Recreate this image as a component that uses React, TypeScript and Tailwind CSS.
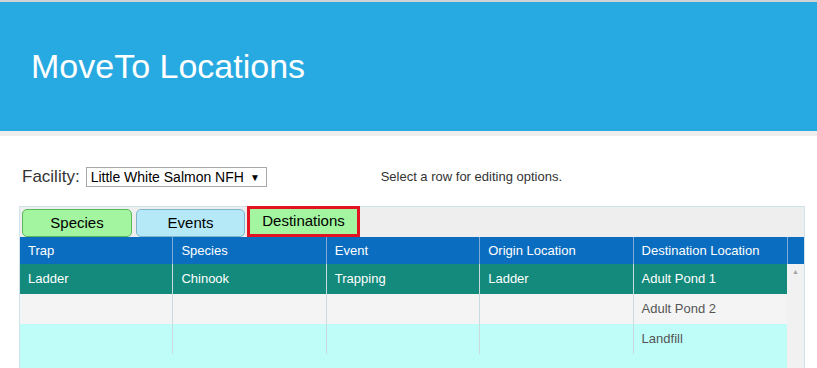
import React from 'react';

const columns = ['Trap', 'Species', 'Event', 'Origin Location', 'Destination Location'];

const rows = [
  { cells: ['Ladder', 'Chinook', 'Trapping', 'Ladder', 'Adult Pond 1'], selected: true },
  { cells: ['', '', '', '', 'Adult Pond 2'], selected: false },
  { cells: ['', '', '', '', 'Landfill'], selected: false },
];

export default function App() {
  return (
    <div className="w-[817px] h-[368px] overflow-hidden bg-white font-['Liberation_Sans',Arial,sans-serif]">
      {/* header */}
      <div className="border-t-2 border-[#cfd3d6] bg-[#27aae1] h-[131px] flex items-center pl-[31px]">
        <h1 className="text-white text-[34px] leading-none mt-[-2px]">MoveTo Locations</h1>
      </div>
      <div className="h-[5px] bg-[#eeeeee]" />

      {/* facility row */}
      <div className="flex items-center pl-[22px] pt-[24px] h-[60px] pb-[2px]">
        <span className="text-[17px] text-[#333] mr-[6px]">Facility:</span>
        <div className="flex items-center h-[20px] w-[181px] border border-[#a9a9a9] px-[4px] text-[14px] text-black">
          Little White Salmon NFH <span className="ml-[6px] text-[10px]">▼</span>
        </div>
        <span className="ml-[114px] text-[13px] text-[#333]">Select a row for editing options.</span>
      </div>

      {/* tab panel */}
      <div className="ml-[19px] mt-[10px] w-[786px] border border-[#cde4ea] bg-[#eeeeee]">
        <div className="flex items-end h-[30px] pl-[2px] gap-[4px]">
          <button className="w-[110px] h-[28px] rounded-[5px] border border-[#5cb85c] bg-[#a3f59f] text-[15px] text-black">
            Species
          </button>
          <button className="w-[109px] h-[28px] rounded-[5px] border border-[#7fb6cc] bg-[#b5e9f7] text-[15px] text-black">
            Events
          </button>
          <button className="w-[113px] h-[31px] border-[3px] border-[#e2141f] bg-[#a3f59f] text-[15px] text-black ml-[-2px]">
            Destinations
          </button>
        </div>
        <div className="flex">
          <div className="w-[767px]">
            <div className="grid grid-cols-5 h-[27px] bg-[#0b6dbf] text-white text-[13px]">
              {columns.map((c, i) => (
                <div key={c} className={`flex items-center pl-[8px] ${i < 4 ? 'border-r border-[#7fa9d8]' : ''}`}>
                  {c}
                </div>
              ))}
            </div>
            <div className="bg-[#bffdf9] h-[110px]">
              {rows.map((r, ri) => (
                <div
                  key={ri}
                  className={`grid grid-cols-5 h-[30px] text-[13px] ${
                    r.selected ? 'bg-[#138a7b] text-white' : ri === 1 ? 'bg-[#f4f4f4] text-[#555]' : 'bg-[#bffdf9] text-[#555]'
                  }`}
                >
                  {r.cells.map((cell, ci) => (
                    <div key={ci} className={`flex items-center pl-[8px] ${ci < 4 ? 'border-r border-[#c9dbdf]' : ''}`}>
                      {cell}
                    </div>
                  ))}
                </div>
              ))}
            </div>
          </div>
          <div className="w-[17px] flex flex-col">
            <div className="h-[27px] bg-[#0b6dbf] border-l border-[#7fa9d8]" />
            <div className="flex-1 bg-[#f1f1f1] flex justify-center pt-[4px]">
              <span className="text-[7px] text-[#a3a3a3] leading-none">▲</span>
            </div>
          </div>
        </div>
      </div>
    </div>
  );
}
